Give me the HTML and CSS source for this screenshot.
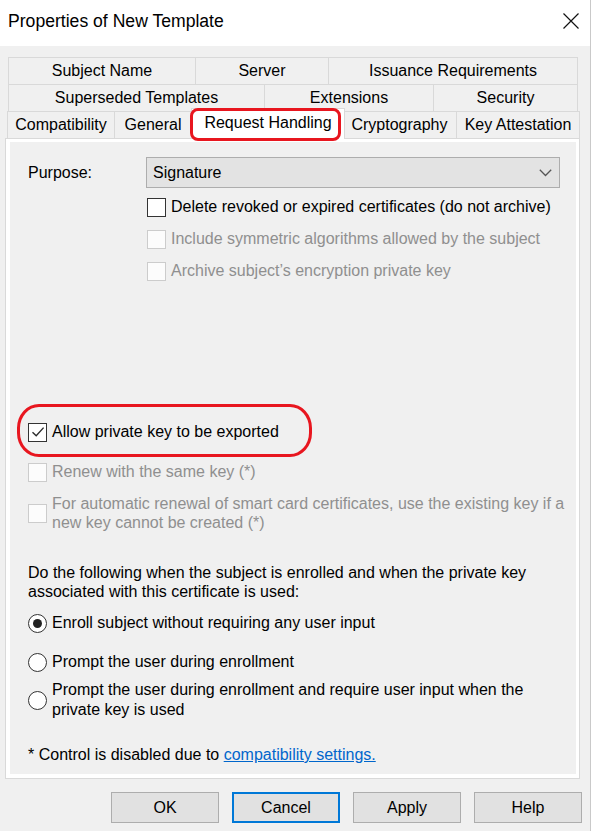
FILE: index.html
```html
<!DOCTYPE html>
<html lang="en">
<head>
<meta charset="utf-8">
<title>Properties of New Template</title>
<link rel="stylesheet" href="styles.css">
</head>
<body>
<div class="window">
  <div class="titlebar">
    <span class="title">Properties of New Template</span>
    <svg class="close" width="16" height="16" viewBox="0 0 16 16"><path d="M0.5 0.5 L15.5 15.5 M15.5 0.5 L0.5 15.5" stroke="#111" stroke-width="1.2" fill="none"/></svg>
  </div>

  <div class="tabs">
    <div class="tab-row">
      <div class="tab t-subject">Subject Name</div>
      <div class="tab t-server">Server</div>
      <div class="tab t-issuance">Issuance Requirements</div>
    </div>
    <div class="tab-row">
      <div class="tab t-superseded">Superseded Templates</div>
      <div class="tab t-extensions">Extensions</div>
      <div class="tab t-security">Security</div>
    </div>
    <div class="tab-row">
      <div class="tab t-compat">Compatibility</div>
      <div class="tab t-general">General</div>
      <div class="tab tab-selected t-request">Request Handling</div>
      <div class="tab t-crypto">Cryptography</div>
      <div class="tab t-keyatt">Key Attestation</div>
    </div>
  </div>

  <div class="panel">
    <div class="page">
      <div class="purpose-row">
        <span class="label">Purpose:</span>
        <div class="combo">
          <span>Signature</span>
          <svg width="13" height="8" viewBox="0 0 13 8"><path d="M0.8 0.8 L6.5 6.5 L12.2 0.8" stroke="#555" stroke-width="1.3" fill="none"/></svg>
        </div>
      </div>

      <div class="check-group">
        <div class="check-row">
          <span class="box"></span>
          <span>Delete revoked or expired certificates (do not archive)</span>
        </div>
        <div class="check-row disabled">
          <span class="box"></span>
          <span>Include symmetric algorithms allowed by the subject</span>
        </div>
        <div class="check-row disabled">
          <span class="box"></span>
          <span>Archive subject’s encryption private key</span>
        </div>
      </div>

      <div class="check-row row-allow">
        <span class="box">
          <svg width="16" height="16" viewBox="0 0 16 16"><path d="M2.5 8.2 L6.2 11.8 L13.6 3.6" stroke="#2b2b2b" stroke-width="1.4" fill="none"/></svg>
        </span>
        <span>Allow private key to be exported</span>
      </div>
      <div class="check-row disabled row-renew">
        <span class="box"></span>
        <span>Renew with the same key (*)</span>
      </div>
      <div class="check-row disabled row-auto">
        <span class="box"></span>
        <span class="two-line">For automatic renewal of smart card certificates, use the existing key if a<br>new key cannot be created (*)</span>
      </div>

      <p class="para">Do the following when the subject is enrolled and when the private key<br>associated with this certificate is used:</p>

      <div class="radio-row radio-first">
        <span class="radio on"></span>
        <span>Enroll subject without requiring any user input</span>
      </div>
      <div class="radio-row radio-second">
        <span class="radio"></span>
        <span>Prompt the user during enrollment</span>
      </div>
      <div class="radio-row radio-third">
        <span class="radio"></span>
        <span class="two-line-r">Prompt the user during enrollment and require user input when the<br>private key is used</span>
      </div>

      <p class="footnote">* Control is disabled due to <a class="link" href="#">compatibility settings.</a></p>
    </div>
  </div>

  <div class="buttons">
    <button class="btn">OK</button>
    <button class="btn btn-focus">Cancel</button>
    <button class="btn">Apply</button>
    <button class="btn">Help</button>
  </div>

  <div class="mark mark-tab"></div>
  <div class="mark mark-export"></div>
</div>
</body>
</html>
```

FILE: styles.css
```css
* { box-sizing: border-box; }

html, body {
  margin: 0;
  padding: 0;
  background: #ffffff;
}

body {
  font-family: "Liberation Sans", Arial, sans-serif;
  font-size: 16px;
  color: #000;
}

.window {
  position: relative;
  width: 591px;
  height: 831px;
  background: #f0f0f0;
  border-right: 1px solid #c9c9c9;
  overflow: hidden;
}

.titlebar {
  height: 46px;
  background: #ffffff;
  display: flex;
  align-items: center;
  justify-content: space-between;
  padding: 0 11px 4px 8px;
}

.title {
  font-size: 17.6px;
  color: #000;
}

.close { display: block; }

/* tabs */
.tabs {
  margin: 11px 0 0 8px;
}

.tab-row {
  display: flex;
  height: 27px;
}

.tab {
  height: 27px;
  border: 1px solid #d9d9d9;
  border-bottom: none;
  background: #f0f0f0;
  text-align: center;
  line-height: 26px;
  white-space: nowrap;
}

.tab + .tab { margin-left: -1px; }

.t-subject { width: 188px; }
.t-server { width: 134px; }
.t-issuance { width: 250px; }

.t-superseded { width: 257px; }
.t-extensions { width: 170px; }
.t-security { width: 145px; }

.t-compat { width: 108px; margin-left: -1px; }
.t-general { width: 78px; }
.t-request { width: 149px; }
.t-crypto { width: 115px; }
.t-keyatt { width: 124px; }

.tab-selected {
  background: #ffffff;
  height: 31px;
  margin-top: -3px;
  margin-left: -3px;
  margin-right: -2px;
  width: 154px;
  line-height: 28px;
  z-index: 2;
}

.tab-selected + .tab { margin-left: -1px; }

/* panel */
.panel {
  margin-left: 5px;
  width: 575px;
  height: 641px;
  border: 1px solid #d9d9d9;
  background: #ffffff;
  padding: 3px 3px 4px 4px;
}

.page {
  height: 100%;
  background: #f0f0f0;
  padding: 15px 0 0 18px;
}

.purpose-row {
  display: flex;
  align-items: center;
  height: 31px;
}

.label { width: 118px; }

.combo {
  width: 414px;
  height: 31px;
  background: #e3e3e3;
  border: 1px solid #adadad;
  display: flex;
  align-items: center;
  justify-content: space-between;
  padding: 0 7px 0 6px;
}

.combo svg { display: block; }

.check-group {
  margin: 3px 0 0 119px;
}

.check-row {
  display: flex;
  align-items: center;
  height: 32px;
  gap: 5px;
  white-space: nowrap;
}

.box {
  width: 19px;
  height: 19px;
  flex: none;
  border: 1px solid #333333;
  background: #ffffff;
  display: flex;
  align-items: center;
  justify-content: center;
}

.box svg { display: block; }

.disabled { color: #8f8f8f; }
.disabled .box { border-color: #cccccc; background: #fcfcfc; }

.row-allow { margin-top: 129px; }
.row-renew { margin-top: 8px; }
.row-auto { margin-top: 6px; height: 38px; }

.two-line { line-height: 19px; }

.para {
  margin: 31px 0 0 0;
  line-height: 19px;
}

.radio-row {
  display: flex;
  align-items: center;
  gap: 5px;
  height: 32px;
  white-space: nowrap;
}

.radio-first { margin-top: 6px; }
.radio-second { margin-top: 7px; }
.radio-third { margin-top: 2px; height: 40px; }

.two-line-r { line-height: 20px; }

.radio {
  width: 19px;
  height: 19px;
  flex: none;
  border: 1px solid #333333;
  border-radius: 50%;
  background: #ffffff;
  display: flex;
  align-items: center;
  justify-content: center;
}

.radio.on::after {
  content: "";
  width: 9px;
  height: 9px;
  border-radius: 50%;
  background: #222222;
}

.footnote {
  margin: 25px 0 0 0;
  line-height: 20px;
}

.link {
  color: #0066cc;
  text-decoration: underline;
}

/* buttons */
.buttons {
  margin-top: 13px;
  display: flex;
  justify-content: flex-end;
  gap: 13px;
  padding-right: 8px;
}

.btn {
  width: 108px;
  height: 31px;
  background: #e1e1e1;
  border: 1px solid #adadad;
  font-family: "Liberation Sans", Arial, sans-serif;
  font-size: 16px;
  color: #000;
  padding: 0;
}

.btn-focus { border: 2px solid #0078d7; }

/* annotations */
.mark {
  position: absolute;
  z-index: 5;
  border: 3px solid #e8161f;
  pointer-events: none;
}

.mark-tab {
  left: 190px;
  top: 108px;
  width: 151px;
  height: 33px;
  border-radius: 8px;
}

.mark-export {
  left: 17px;
  top: 404px;
  width: 295px;
  height: 53px;
  border-width: 3.5px;
  border-radius: 22px / 24px;
}
```
